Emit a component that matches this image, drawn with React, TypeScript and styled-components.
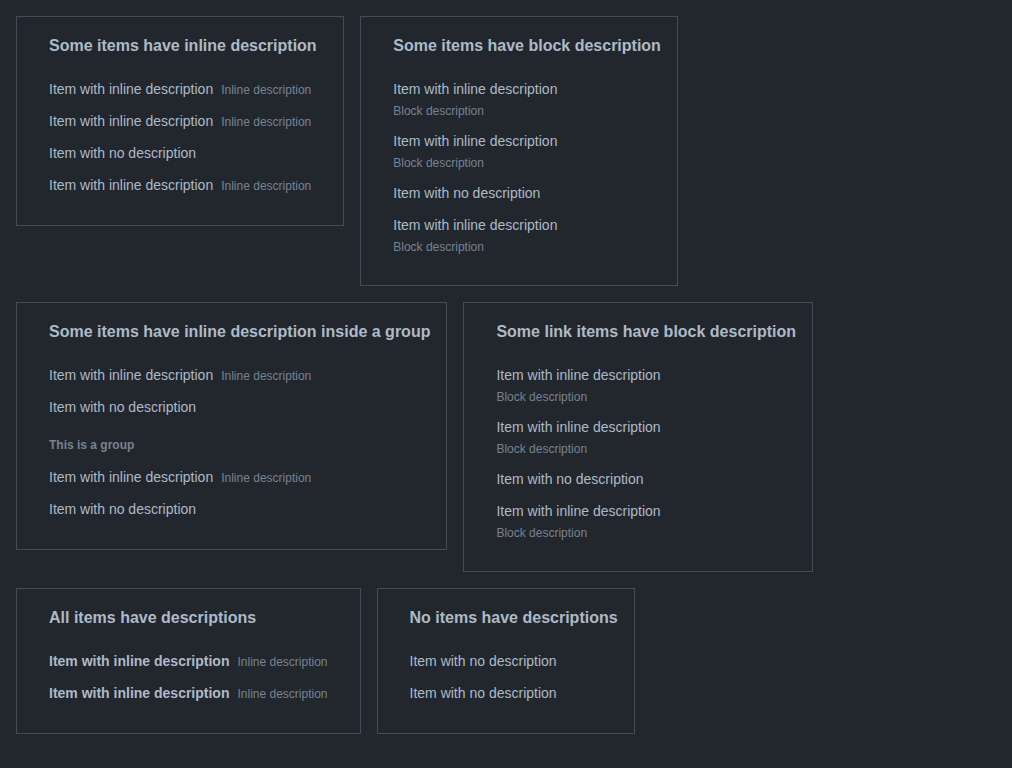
import React from "react";
import styled, { createGlobalStyle } from "styled-components";

const Global = createGlobalStyle`
  html, body {
    margin: 0;
    padding: 0;
    background: #22272e;
  }
  body {
    font-family: "Liberation Sans", Arial, Helvetica, sans-serif;
    color: #adbac7;
    -webkit-font-smoothing: antialiased;
  }
`;

const Page = styled.div`
  display: flex;
  flex-wrap: wrap;
  align-items: flex-start;
  align-content: flex-start;
  gap: 16px;
  padding: 16px;
  min-height: 768px;
  box-sizing: border-box;
`;

const Card = styled.section`
  border: 1px solid #444c56;
  padding: 16px;
  background: #22272e;
`;

const Title = styled.h2`
  margin: 0 0 7px;
  padding: 1px 0 0 16px;
  font-size: 16px;
  line-height: 24px;
  font-weight: 700;
  color: #adbac7;
  white-space: nowrap;
`;

const List = styled.ul<{ $nested?: boolean }>`
  list-style: none;
  margin: 0;
  padding: ${(p) => (p.$nested ? "0" : "8px 0")};
`;

const Item = styled.li<{ $block?: boolean }>`
  display: flex;
  flex-direction: ${(p) => (p.$block ? "column" : "row")};
  align-items: ${(p) => (p.$block ? "flex-start" : "baseline")};
  gap: ${(p) => (p.$block ? "4px" : "8px")};
  margin: 0 8px;
  padding: 6px 8px;
  white-space: nowrap;
`;

const Label = styled.span<{ $bold?: boolean }>`
  font-size: 14px;
  line-height: 20px;
  font-weight: ${(p) => (p.$bold ? 700 : 400)};
  color: #adbac7;
`;

const LinkLabel = styled.a`
  font-size: 14px;
  line-height: 20px;
  color: #adbac7;
  text-decoration: none;
`;

const Desc = styled.span`
  font-size: 12px;
  line-height: 16px;
  color: #768390;
`;

const Group = styled.li`
  margin-top: 8px;
`;

const GroupHeader = styled.div`
  padding: 6px 16px 8px;
  font-size: 12px;
  line-height: 16px;
  font-weight: 700;
  color: #768390;
`;

type Row = { label: string; desc?: string; bold?: boolean };

const Rows = ({ rows, block, link }: { rows: Row[]; block?: boolean; link?: boolean }) => (
  <>
    {rows.map((r, i) => (
      <Item key={i} $block={block && !!r.desc}>
        {link ? (
          <LinkLabel href="#">{r.label}</LinkLabel>
        ) : (
          <Label $bold={r.bold}>{r.label}</Label>
        )}
        {r.desc && <Desc>{r.desc}</Desc>}
      </Item>
    ))}
  </>
);

const inl: Row = { label: "Item with inline description", desc: "Inline description" };
const blk: Row = { label: "Item with inline description", desc: "Block description" };
const none: Row = { label: "Item with no description" };

export default function App() {
  return (
    <>
      <Global />
      <Page>
        <Card>
          <Title>Some items have inline description</Title>
          <List>
            <Rows rows={[inl, inl, none, inl]} />
          </List>
        </Card>
        <Card>
          <Title>Some items have block description</Title>
          <List>
            <Rows rows={[blk, blk, none, blk]} block />
          </List>
        </Card>
        <Card>
          <Title>Some items have inline description inside a group</Title>
          <List>
            <Rows rows={[inl, none]} />
            <Group>
              <GroupHeader>This is a group</GroupHeader>
              <List $nested>
                <Rows rows={[inl, none]} />
              </List>
            </Group>
          </List>
        </Card>
        <Card>
          <Title>Some link items have block description</Title>
          <List>
            <Rows rows={[blk, blk, none, blk]} block link />
          </List>
        </Card>
        <Card>
          <Title>All items have descriptions</Title>
          <List>
            <Rows rows={[{ ...inl, bold: true }, { ...inl, bold: true }]} />
          </List>
        </Card>
        <Card>
          <Title>No items have descriptions</Title>
          <List>
            <Rows rows={[none, none]} />
          </List>
        </Card>
      </Page>
    </>
  );
}
